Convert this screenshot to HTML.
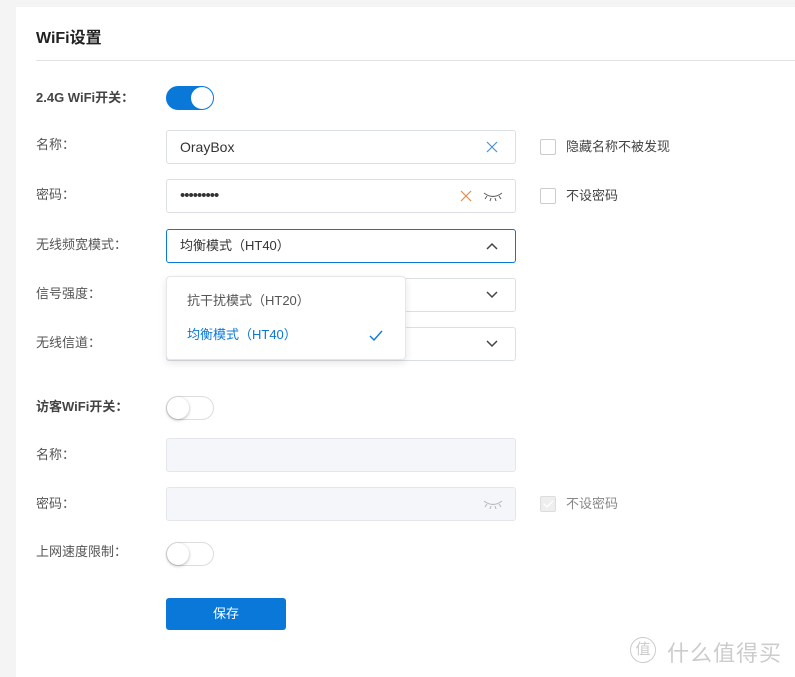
<!DOCTYPE html>
<html><head><meta charset="utf-8"><style>
*{box-sizing:border-box;margin:0;padding:0}
body{width:795px;height:677px;background:#f4f4f4;font-family:"Liberation Sans","Noto Sans CJK SC",sans-serif;font-size:13px;color:#333;position:relative;overflow:hidden}
.card{position:absolute;left:16px;top:7px;right:0;bottom:0;background:#fff}
.abs{position:absolute}
.title{left:36px;top:24px;font-size:16px;font-weight:bold;color:#222}
.hr{left:36px;right:0;top:60px;height:1px;background:#e2e2e2}
.lbl{left:36px;color:#555;font-size:13px;line-height:20px}
.b{font-weight:bold;color:#444}
.inp{left:166px;width:350px;height:34px;border:1px solid #dcdfe6;border-radius:3px;background:#fff;padding-left:13px;line-height:32px;font-size:14px;color:#333}
.dis{background:#f5f6fa;border-color:#e4e6ec}
.tg{left:166px;width:48px;height:24px;border-radius:12px;border:1px solid #ddd;background:#fff}
.tg::after{content:"";position:absolute;left:0;top:0;width:22px;height:22px;border-radius:50%;background:#fff;box-shadow:0 1px 3px rgba(0,0,0,.3)}
.tg.on{background:#0a78d8;border-color:#0a78d8}
.tg.on::after{left:24px;box-shadow:none}
.cb{left:540px;width:16px;height:16px;border:1px solid #ccc;border-radius:2px;background:#fff}
.cbl{left:566px;font-size:13px;color:#444;line-height:20px}
.icon{position:absolute;top:9px}
.btn{left:166px;top:598px;width:120px;height:32px;background:#0a78d8;border-radius:3px;color:#fff;text-align:center;line-height:32px;font-size:13px}
.dd{left:166px;top:276px;width:240px;height:84px;background:#fff;border:1px solid #e6e6e6;border-radius:4px;box-shadow:0 3px 8px rgba(0,0,0,.1)}
.dd .it{position:absolute;left:20px;font-size:13px;line-height:20px}
</style></head><body>
<div class="card"></div>
<div class="abs title">WiFi设置</div>
<div class="abs hr"></div>

<div class="abs lbl b" style="top:88px">2.4G WiFi开关：</div>
<div class="abs tg on" style="top:86px"></div>

<div class="abs lbl" style="top:135px">名称：</div>
<div class="abs inp" style="top:130px">OrayBox
<svg class="icon" style="left:318px" width="14" height="14" viewBox="0 0 14 14"><path d="M2 2L12 12M12 2L2 12" stroke="#4a90d9" stroke-width="1.2"/></svg></div>
<div class="abs cb" style="top:139px"></div><div class="abs cbl" style="top:137px">隐藏名称不被发现</div>

<div class="abs lbl" style="top:185px">密码：</div>
<div class="abs inp" style="top:179px;font-size:15px;letter-spacing:-1px">•••••••••
<svg class="icon" style="left:292px" width="14" height="14" viewBox="0 0 14 14"><path d="M2 2L12 12M12 2L2 12" stroke="#e08a4a" stroke-width="1.2"/></svg>
<svg class="icon" style="left:316px;top:10px" width="20" height="12" viewBox="0 0 20 12"><path d="M1 3Q10 10 19 3M4 6L2 9M8 8L7 11M12 8L13 11M16 6L18 9" stroke="#666" stroke-width="1.1" fill="none"/></svg></div>
<div class="abs cb" style="top:188px"></div><div class="abs cbl" style="top:186px">不设密码</div>

<div class="abs lbl" style="top:235px">无线频宽模式：</div>
<div class="abs inp" style="top:229px;border-color:#0a78d8;font-size:13px">均衡模式（HT40）
<svg class="icon" style="left:318px;top:11px" width="14" height="10" viewBox="0 0 14 10"><path d="M2 8L7 3L12 8" stroke="#444" stroke-width="1.5" fill="none"/></svg></div>

<div class="abs lbl" style="top:284px">信号强度：</div>
<div class="abs inp" style="top:278px"><svg class="icon" style="left:318px;top:11px" width="14" height="10" viewBox="0 0 14 10"><path d="M2 2L7 7L12 2" stroke="#444" stroke-width="1.5" fill="none"/></svg></div>
<div class="abs lbl" style="top:333px">无线信道：</div>
<div class="abs inp" style="top:327px"><svg class="icon" style="left:318px;top:11px" width="14" height="10" viewBox="0 0 14 10"><path d="M2 2L7 7L12 2" stroke="#444" stroke-width="1.5" fill="none"/></svg></div>

<div class="abs dd">
<div class="it" style="top:14px;color:#555">抗干扰模式（HT20）</div>
<div class="it" style="top:48px;color:#0a78d8">均衡模式（HT40）</div>
<svg style="position:absolute;left:202px;top:53px" width="14" height="11" viewBox="0 0 14 11"><path d="M1 6L5 10L13 1" stroke="#0a78d8" stroke-width="1.4" fill="none"/></svg>
</div>

<div class="abs lbl b" style="top:397px">访客WiFi开关：</div>
<div class="abs tg" style="top:396px"></div>

<div class="abs lbl" style="top:445px">名称：</div>
<div class="abs inp dis" style="top:438px"></div>
<div class="abs lbl" style="top:494px">密码：</div>
<div class="abs inp dis" style="top:487px"><svg class="icon" style="left:316px;top:10px" width="20" height="12" viewBox="0 0 20 12"><path d="M1 3Q10 10 19 3M4 6L2 9M8 8L7 11M12 8L13 11M16 6L18 9" stroke="#bbb" stroke-width="1.1" fill="none"/></svg></div>
<div class="abs cb" style="top:496px;background:#eee;border-color:#ddd"><svg style="position:absolute;left:2px;top:3px" width="11" height="9" viewBox="0 0 11 9"><path d="M1 4L4 7L10 1" stroke="#fff" stroke-width="1.3" fill="none"/></svg></div><div class="abs cbl" style="top:494px;color:#888">不设密码</div>

<div class="abs lbl" style="top:542px">上网速度限制：</div>
<div class="abs tg" style="top:542px"></div>

<div class="abs btn">保存</div>
<div class="abs" style="left:630px;top:637px;width:26px;height:26px;border:1.5px solid #ccc;border-radius:50%;color:#ccc;font-size:15px;text-align:center;line-height:23px">值</div>
<div class="abs" style="left:667px;top:636px;color:#ccc;font-size:22px;letter-spacing:1px">什么值得买</div>
</body></html>
